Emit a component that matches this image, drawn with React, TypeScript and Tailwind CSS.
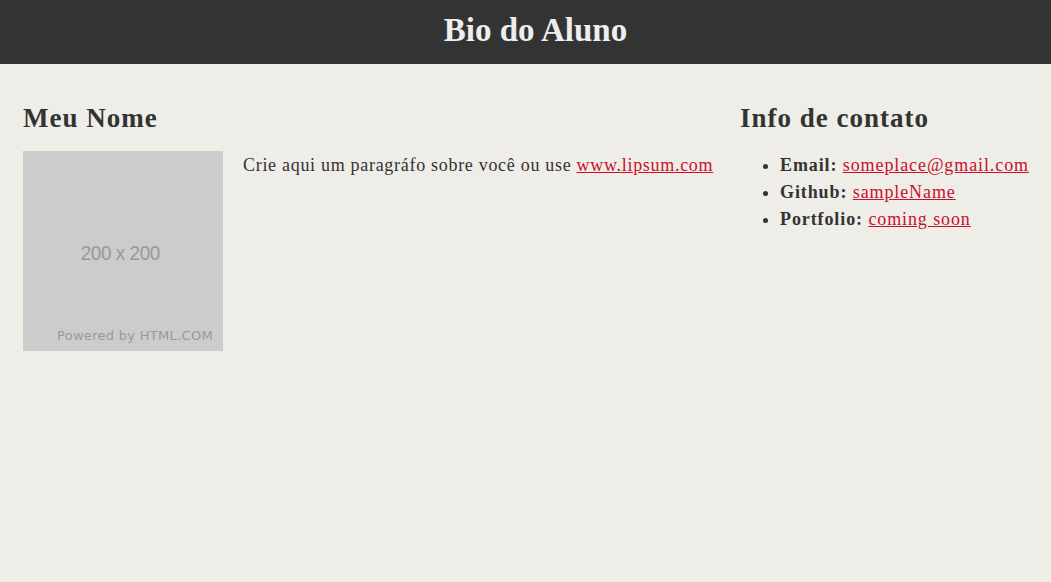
export default function App() {
  return (
    <div className="min-h-[582px] bg-[#eeede7] text-[#333333] font-['Liberation_Serif',serif]">
      <header className="h-[64px] bg-[#333333] flex items-center justify-center pl-[20px] pb-[4px]">
        <h1 className="text-[33px] font-bold text-[#eeeeee] leading-none">Bio do Aluno</h1>
      </header>

      <main className="flex pl-[23px] pt-[36px]">
        {/* Left: name, photo, bio */}
        <section className="w-[717px]">
          <h2 className="text-[27px] font-bold tracking-[1px] leading-[36px]">Meu Nome</h2>
          <div className="flex gap-[20px] mt-[15px]">
            <div className="relative w-[200px] h-[200px] shrink-0 bg-[#cccccc] font-['Liberation_Sans',sans-serif] text-[#999999]">
              <div className="h-full flex items-center justify-center pt-[4px] pr-[6px] text-[21px] tracking-[-0.5px] scale-x-90">200 x 200</div>
              <span className="absolute right-[10px] bottom-[6px] font-['DejaVu_Sans',sans-serif] text-[13px] tracking-[0.3px]">
                Powered by HTML.COM
              </span>
            </div>
            <p className="text-[18px] leading-[28px] tracking-[0.7px]">
              Crie aqui um paragráfo sobre você ou use{" "}
              <a href="#" className="text-[#c8102e] underline">www.lipsum.com</a>
            </p>
          </div>
        </section>

        {/* Right: contact info */}
        <section className="flex-1">
          <h2 className="text-[27px] font-bold tracking-[1px] leading-[36px]">Info de contato</h2>
          <ul className="list-disc pl-[40px] mt-[16px] text-[18px] leading-[27px] tracking-[0.9px]">
            <li><b>Email:</b> <a href="#" className="text-[#c8102e] underline">someplace@gmail.com</a></li>
            <li><b>Github:</b> <a href="#" className="text-[#c8102e] underline">sampleName</a></li>
            <li><b>Portfolio:</b> <a href="#" className="text-[#c8102e] underline">coming soon</a></li>
          </ul>
        </section>
      </main>
    </div>
  );
}
